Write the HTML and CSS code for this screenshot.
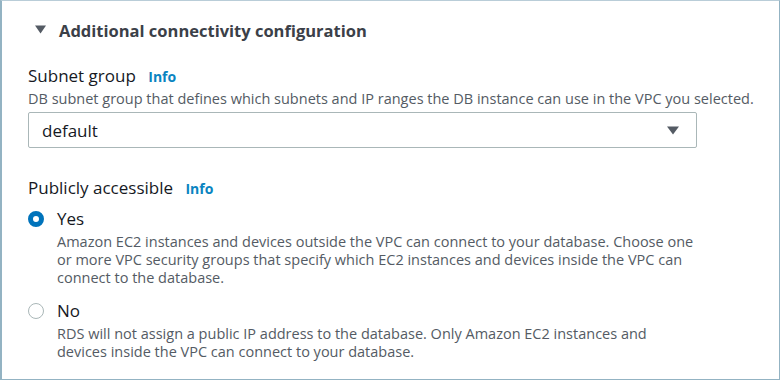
FILE: index.html
```html
<!DOCTYPE html>
<html>
<head>
<meta charset="utf-8">
<link rel="stylesheet" href="styles.css">
</head>
<body>
<div class="panel">
  <div class="heading">
    <svg class="caret" width="11" height="9" viewBox="0 0 11 9"><path d="M0 0.5 H11 L5.5 8.5 Z" fill="#545b64"/></svg>
    <span>Additional connectivity configuration</span>
  </div>

  <div class="field subnet">
    <div class="label">Subnet group <a class="info">Info</a></div>
    <div class="desc">DB subnet group that defines which subnets and IP ranges the DB instance can use in the VPC you selected.</div>
    <div class="select">
      <span>default</span>
      <svg width="12" height="9" viewBox="0 0 12 9"><path d="M0 0.5 H12 L6 8.5 Z" fill="#545b64"/></svg>
    </div>
  </div>

  <div class="field public">
    <div class="label">Publicly accessible <a class="info">Info</a></div>
    <div class="radio first">
      <span class="dot on"></span>
      <div class="rtext">
        <div class="rlabel">Yes</div>
        <div class="desc">Amazon EC2 instances and devices outside the VPC can connect to your database. Choose one<br>or more VPC security groups that specify which EC2 instances and devices inside the VPC can<br>connect to the database.</div>
      </div>
    </div>
    <div class="radio">
      <span class="dot"></span>
      <div class="rtext">
        <div class="rlabel">No</div>
        <div class="desc">RDS will not assign a public IP address to the database. Only Amazon EC2 instances and<br>devices inside the VPC can connect to your database.</div>
      </div>
    </div>
  </div>
</div>
</body>
</html>
```

FILE: styles.css
```css
html, body {
  margin: 0;
  padding: 0;
  background: #fff;
}
body {
  font-family: "Open Sans", Roboto, Arial, sans-serif;
  color: #16191f;
}
.panel {
  width: 777px;
  height: 378px;
  border-left: 2px solid #93b3c3;
  border-right: 1px solid #93b3c3;
  border-bottom: 1px solid #93b3c3;
  border-top: 1px solid #b9cdd8;
  box-sizing: content-box;
}
.heading {
  display: flex;
  align-items: center;
  padding: 18px 0 0 33px;
  height: 22px;
  font-size: 16.5px;
  font-weight: 700;
  color: #3b4048;
}
.heading .caret {
  margin-right: 13px;
  margin-top: -1px;
}
.field {
  padding-left: 26px;
}
.subnet {
  margin-top: 25px;
}
.label {
  font-size: 17px;
  line-height: 20px;
}
.info {
  color: #0a84c1;
  font-weight: 700;
  font-size: 14px;
  margin-left: 8px;
}
.desc {
  font-size: 14.5px;
  line-height: 18px;
  color: #545b64;
}
.subnet .desc {
  margin-top: 3px;
}
.select {
  margin-top: 4px;
  display: flex;
  align-items: center;
  justify-content: space-between;
  padding: 0 17px 0 13px;
  box-sizing: border-box;
  width: 669px;
  height: 36px;
  border: 1px solid #aab7b8;
  border-radius: 2px;
  font-size: 17px;
}
.public {
  margin-top: 30px;
}
.radio {
  display: flex;
  align-items: flex-start;
}
.radio.first {
  margin-top: 10px;
}
.radio + .radio {
  margin-top: 14px;
}
.dot {
  width: 16px;
  height: 16px;
  border-radius: 50%;
  box-sizing: border-box;
  border: 1px solid #aab7b8;
  margin: 2px 13px 0 0;
  flex: none;
}
.dot.on {
  border: 5px solid #0073bb;
}
.rlabel {
  font-size: 17px;
  line-height: 20px;
  margin-bottom: 4px;
}
```
